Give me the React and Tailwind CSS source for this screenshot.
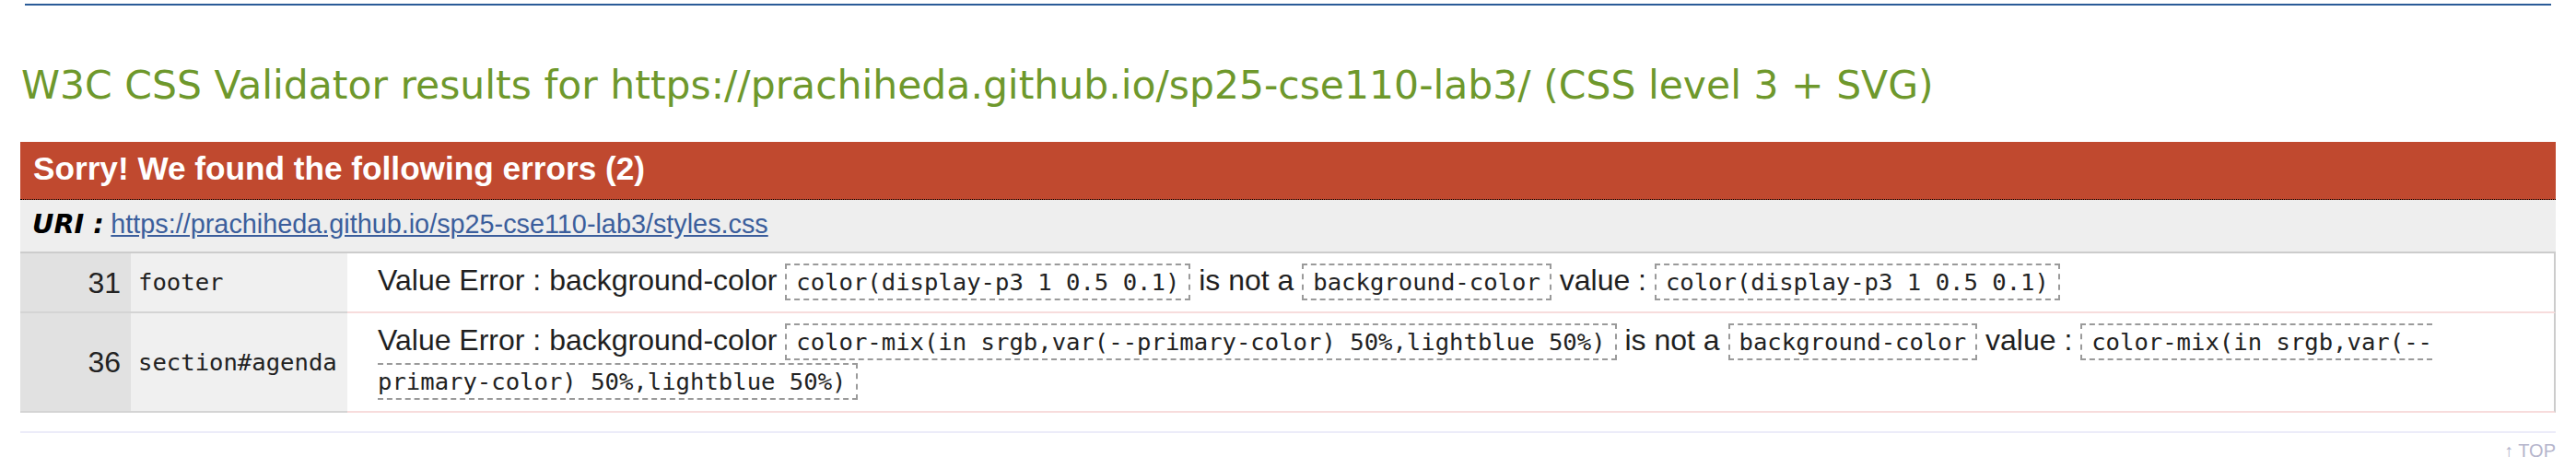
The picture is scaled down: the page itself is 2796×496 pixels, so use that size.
export default function App() {
  const sans = "font-['Liberation_Sans',Arial,Helvetica,sans-serif]";
  const mono = "font-['DejaVu_Sans_Mono',Menlo,monospace]";

  const Code = ({ children }) => (
    <code className="font-['DejaVu_Sans_Mono',Menlo,monospace] text-[25.6px] border-2 border-dashed border-[#9a9a9a] px-[10px] py-[3px] text-[#222]">
      {children}
    </code>
  );

  const rows = [
    {
      line: "31",
      sel: "footer",
      bad: "color(display-p3 1 0.5 0.1)",
    },
    {
      line: "36",
      sel: "section#agenda",
      bad: "color-mix(in srgb,var(--primary-color) 50%,lightblue 50%)",
    },
  ];

  return (
    <div className="w-[2796px] bg-white px-[22px]">
      <div className="mt-[4px] mx-[5px] h-[2px] bg-[#2a5b98]" />

      <h2 className="mt-[62px] font-['DejaVu_Sans',Verdana,sans-serif] text-[42.5px] leading-[50px] text-[#6e982c] pl-[1px]">
        W3C CSS Validator results for https://prachiheda.github.io/sp25-cse110-lab3/ (CSS level 3 + SVG)
      </h2>

      <div className="mt-[36px]">
        <div className={`${sans} bg-[#c0492f] text-white font-bold text-[35.2px] leading-[40px] pt-[9px] pb-[13px] pl-[14px] border-b border-dotted border-black`}>
          Sorry! We found the following errors (2)
        </div>

        <div className="bg-[#eeeeee] pt-[5px] pb-[10px] pl-[13px] leading-[40px] text-[28.8px]">
          <span className="font-['DejaVu_Sans',Verdana,sans-serif] font-bold italic text-black">URI :</span>{" "}
          <a className={`${sans} text-[#3b5e9c] underline`} href="#">
            https://prachiheda.github.io/sp25-cse110-lab3/styles.css
          </a>
        </div>

        <table className="w-full border-separate border-spacing-0 border-t-2 border-[#cccccc]">
          <tbody>
            {rows.map((r) => (
              <tr key={r.line}>
                <td className={`${sans} w-[120px] bg-[#e1e1e1] text-right pr-[11px] align-middle text-[32px] text-[#222] border-b-2 border-[#d4d4d4]`}>
                  {r.line}
                </td>
                <td className={`${mono} w-[235px] bg-[#f0f0f0] pl-[8px] align-middle text-[25.6px] text-[#222] border-b-2 border-[#d4d4d4]`}>
                  {r.sel}
                </td>
                <td className={`${sans} align-top pl-[33px] pr-[33px] pt-[9px] pb-[11px] leading-[41px] text-[32px] text-[#1f1f1f] border-b-2 border-b-[#f7dcdc] border-r-2 border-r-[#cccccc]`}>
                  Value Error : background-color <Code>{r.bad}</Code> is not a{" "}
                  <Code>background-color</Code> value : <Code>{r.bad}</Code>
                </td>
              </tr>
            ))}
          </tbody>
        </table>
      </div>

      <div className="mt-[20px] h-[2px] bg-[#ececf9]" />
      <div className={`${sans} mt-[9px] text-right text-[20px] leading-[20px] text-[#b5b5cc]`}>
        ↑ TOP
      </div>
    </div>
  );
}
